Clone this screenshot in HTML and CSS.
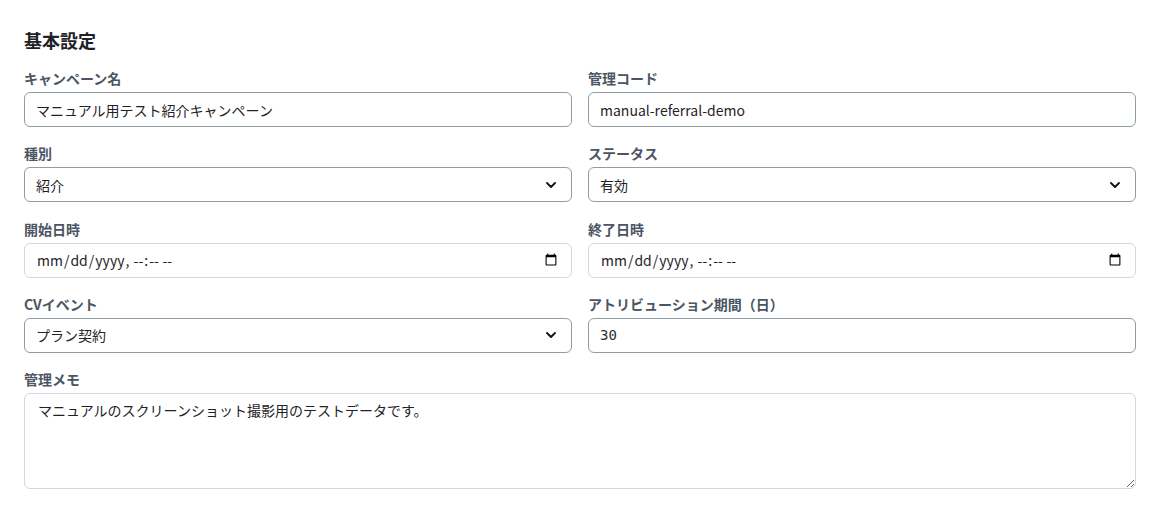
FILE: index.html
```html
<!DOCTYPE html>
<html lang="ja">
<head>
    <meta charset="UTF-8" />
    <title>キャンペーン編集 - 基本設定</title>
    <meta name="viewport" content="width=device-width, initial-scale=1" />
    <link rel="stylesheet" href="styles.css">
</head>
<body>
    <section class="card">
        <h2>基本設定</h2>

        <div class="form-grid">
            <div class="field">
                <label for="name">キャンペーン名</label>
                <input id="name" class="control filled" type="text" value="マニュアル用テスト紹介キャンペーン" />
            </div>
            <div class="field">
                <label for="code">管理コード</label>
                <input id="code" class="control filled" type="text" value="manual-referral-demo" />
            </div>

            <div class="field">
                <label for="kind">種別</label>
                <select id="kind" class="control filled">
                    <option selected>紹介</option>
                    <option>キャンペーン</option>
                </select>
            </div>
            <div class="field">
                <label for="status">ステータス</label>
                <select id="status" class="control filled">
                    <option selected>有効</option>
                    <option>無効</option>
                </select>
            </div>

            <div class="field">
                <label for="start">開始日時</label>
                <input id="start" class="control" type="datetime-local" />
            </div>
            <div class="field">
                <label for="end">終了日時</label>
                <input id="end" class="control" type="datetime-local" />
            </div>

            <div class="field">
                <label for="cv">CVイベント</label>
                <select id="cv" class="control filled">
                    <option selected>プラン契約</option>
                    <option>会員登録</option>
                </select>
            </div>
            <div class="field">
                <label for="days">アトリビューション期間（日）</label>
                <input id="days" class="control filled mono" type="number" value="30" />
            </div>

            <div class="field wide">
                <label for="memo">管理メモ</label>
                <textarea id="memo" class="control memo" rows="4">マニュアルのスクリーンショット撮影用のテストデータです。</textarea>
            </div>
        </div>
    </section>
</body>
</html>
```

FILE: styles.css
```css
body {
    margin: 0;
    font-family: "Noto Sans CJK JP", "Noto Sans", sans-serif;
    background-color: #ffffff;
    color: #1f2937;
}

.card {
    background-color: #ffffff;
    padding: 28px 24px 24px;
}

    .card h2 {
        margin: 0 0 16px;
        font-size: 18px;
        line-height: 24px;
        font-weight: 700;
        color: #1f2328;
    }

.form-grid {
    display: grid;
    grid-template-columns: 1fr 1fr;
    column-gap: 16px;
    row-gap: 16.33px;
}

.field {
    display: flex;
    flex-direction: column;
    gap: 4px;
}

    .field.wide {
        grid-column: 1 / -1;
    }

    .field label {
        font-size: 14px;
        line-height: 20px;
        font-weight: 700;
        color: #4b5563;
    }

.control {
    box-sizing: border-box;
    height: 35px;
    width: 100%;
    margin: 0;
    padding: 0 11px;
    font-family: "Noto Sans CJK JP", "Noto Sans", sans-serif;
    font-size: 14px;
    color: #1f2328;
    background-color: #ffffff;
    border: 1px solid #d4d7dc;
    border-radius: 6px;
}

    .control.filled {
        border-color: #8d9ea5;
    }

    .control.mono {
        font-family: "DejaVu Sans Mono", monospace;
        font-size: 14px;
        color: #2b2f33;
    }

select.control {
    appearance: none;
    -webkit-appearance: none;
    padding-right: 32px;
    background-image: url("data:image/svg+xml,%3Csvg xmlns='http://www.w3.org/2000/svg' width='10' height='6' viewBox='0 0 10 6'%3E%3Cpath d='M1 1l4 4 4-4' fill='none' stroke='%23111' stroke-width='1.8' stroke-linecap='round' stroke-linejoin='round'/%3E%3C/svg%3E");
    background-repeat: no-repeat;
    background-position: right 15px center;
    background-size: 10px 6px;
}

.memo {
    height: 96px;
    padding: 6px 13px;
    line-height: 21px;
    resize: vertical;
}
```
